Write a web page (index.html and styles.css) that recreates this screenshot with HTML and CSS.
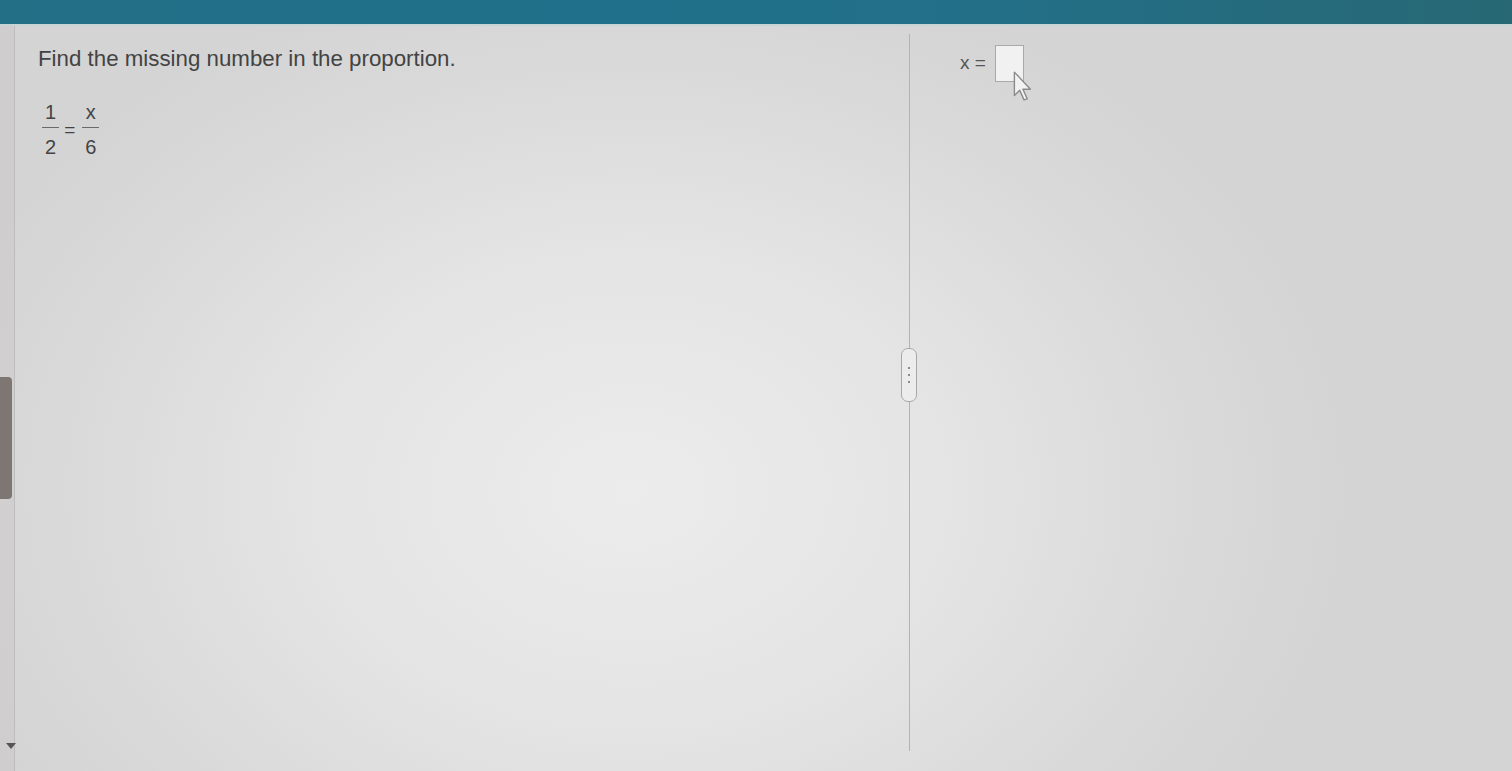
FILE: index.html
```html
<!DOCTYPE html>
<html>
<head>
<meta charset="utf-8">
<link rel="stylesheet" href="styles.css">
</head>
<body>
<div class="topbar"></div>
<div class="main">
  <div class="gutter">
    <div class="thumb"></div>
    <div class="arrow"></div>
  </div>
  <div class="left">
    <p class="question">Find the missing number in the proportion.</p>
    <div class="eq">
      <span class="frac"><span class="num">1</span><span class="den">2</span></span>
      <span class="eqsign">=</span>
      <span class="frac"><span class="num">x</span><span class="den">6</span></span>
    </div>
  </div>
  <div class="divider">
    <div class="handle"><i></i><i></i><i></i></div>
  </div>
  <div class="right">
    <div class="answer">
      <span class="xeq">x =</span>
      <span class="box"></span>
      <svg class="cursor" width="24" height="32" viewBox="0 0 22 30">
        <path d="M2 2 L2 24 L7 19 L11 28 L14 27 L10 18 L17 18 Z" fill="#f2f2f2" stroke="#8a8a8a" stroke-width="1.3" stroke-linejoin="round"/>
      </svg>
    </div>
  </div>
</div>
</body>
</html>
```
FILE: styles.css
```css
html, body {
  margin: 0;
  padding: 0;
  height: 100%;
  overflow: hidden;
}
body {
  font-family: "Liberation Sans", Arial, sans-serif;
  color: #4a4a4a;
  background: radial-gradient(ellipse 720px 540px at 630px 490px, #ececec 0%, #e4e4e4 45%, #d9d9d9 80%, #d4d4d4 100%);
  display: flex;
  flex-direction: column;
}
.topbar {
  height: 24px;
  flex: none;
  background: linear-gradient(90deg, #226f86 0%, #20708b 40%, #22708a 60%, #276874 100%);
  border-bottom: 2px solid #c6d4d4;
}
.main {
  flex: 1;
  display: flex;
  min-height: 0;
}
.gutter {
  width: 14px;
  flex: none;
  border-right: 1px solid #bdbdbd;
  background: rgba(200, 196, 194, 0.4);
  position: relative;
}
.thumb {
  position: absolute;
  left: 0;
  top: 351px;
  width: 12px;
  height: 122px;
  background: #7d7672;
  border-radius: 0 4px 4px 0;
}
.arrow {
  position: absolute;
  left: 6px;
  top: 717px;
  width: 0;
  height: 0;
  border-left: 5px solid transparent;
  border-right: 5px solid transparent;
  border-top: 6px solid #555;
}
.left {
  width: 890px;
  flex: none;
  padding: 18px 0 0 23px;
  box-sizing: border-box;
}
.question {
  margin: 0;
  font-size: 22.3px;
  line-height: 30px;
  color: #434343;
}
.eq {
  margin-top: 28px;
  display: flex;
  align-items: center;
  font-size: 20px;
  margin-left: 4px;
  color: #434343;
}
.frac {
  display: inline-flex;
  flex-direction: column;
  align-items: stretch;
  text-align: center;
}
.num, .den {
  display: block;
  padding: 0 3px;
  line-height: 20px;
}
.num {
  border-bottom: 1px solid #6a6a6a;
  padding-bottom: 5px;
}
.den {
  padding-top: 9px;
}
.eqsign {
  font-size: 19px;
  margin: 0 7px 0 5px;
}
.divider {
  width: 1px;
  flex: none;
  background: #b3b3b3;
  margin-bottom: 20px;
  margin-top: 8px;
  margin-left: 4px;
  position: relative;
}
.handle {
  position: absolute;
  left: -8px;
  top: 314px;
  width: 14px;
  height: 52px;
  background: #ececec;
  border: 1px solid #a8a8a8;
  border-radius: 7px;
  display: flex;
  flex-direction: column;
  align-items: center;
  justify-content: center;
  gap: 5px;
}
.handle i {
  display: block;
  width: 2px;
  height: 2px;
  background: #8a8a8a;
}
.right {
  flex: 1;
  padding: 19px 0 0 50px;
}
.answer {
  display: flex;
  align-items: center;
  position: relative;
  height: 36px;
}
.xeq {
  font-size: 19px;
  color: #555;
  margin-right: 9px;
}
.box {
  display: block;
  width: 27px;
  height: 35px;
  border: 1px solid #a9a9a9;
  background: #f1f1f1;
}
.cursor {
  position: absolute;
  left: 52px;
  top: 25px;
}
```
